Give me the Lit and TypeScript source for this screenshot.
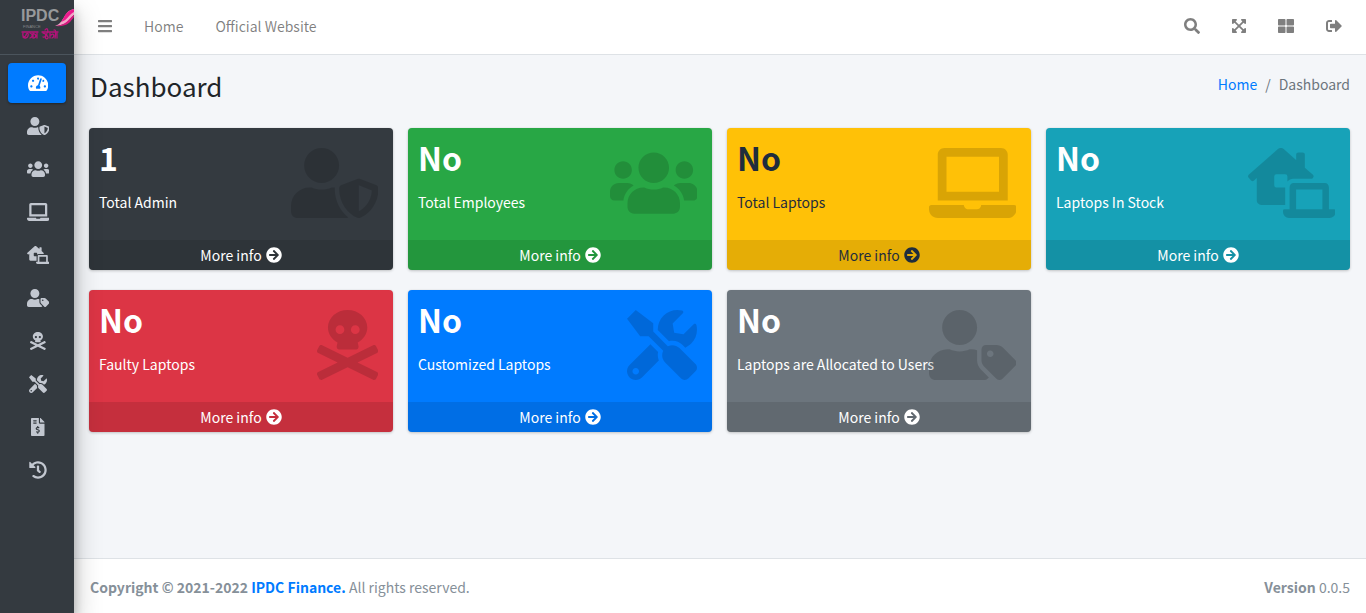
import { LitElement, html, svg, css } from "lit";
import { customElement, property } from "lit/decorators.js";
import { classMap } from "lit/directives/class-map.js";

interface Icon {
  w: number;
  d: string;
}

const icons: Record<string, Icon> = {
  gauge: { w: 576, d: "M288 32C128.94 32 0 160.94 0 320c0 52.8 14.25 102.26 39.06 144.8 5.61 9.62 16.3 15.2 27.44 15.2h443c11.14 0 21.83-5.58 27.44-15.2C561.75 422.26 576 372.8 576 320c0-159.06-128.94-288-288-288zm0 64c14.71 0 26.58 10.13 30.32 23.65-1.11 2.26-2.64 4.23-3.45 6.67l-9.22 27.67c-5.13 3.49-10.97 6.01-17.64 6.01-17.67 0-32-14.33-32-32S270.33 96 288 96zM96 384c-17.67 0-32-14.33-32-32s14.33-32 32-32 32 14.33 32 32-14.33 32-32 32zm48-160c-17.67 0-32-14.33-32-32s14.33-32 32-32 32 14.33 32 32-14.33 32-32 32zm246.77-72.41l-61.33 184C343.13 347.33 352 364.54 352 384c0 11.72-3.38 22.55-8.88 32H232.88c-5.5-9.45-8.88-20.28-8.88-32 0-33.94 26.5-61.43 59.9-63.59l61.34-184.01c4.17-12.56 17.73-19.45 30.36-15.17 12.57 4.19 19.35 17.79 15.17 30.36zm14.66 57.2l15.52-46.55c3.47-1.29 7.13-2.23 11.05-2.23 17.67 0 32 14.33 32 32s-14.33 32-32 32c-11.38-.01-20.89-6.28-26.57-15.22zM480 384c-17.67 0-32-14.33-32-32s14.33-32 32-32 32 14.33 32 32-14.33 32-32 32z" },
  userShield: { w: 640, d: "M622.3 271.1l-115.2-45c-4.1-1.6-12.6-3.7-22.2 0l-115.2 45c-10.7 4.2-17.7 14-17.7 24.9 0 111.6 68.7 188.8 132.9 213.9 9.6 3.7 18 1.6 22.2 0C558.4 489.9 640 420.5 640 296c0-10.9-7-20.7-17.7-24.9zM496 462.4V273.3l95.5 37.3c-5.6 87.1-60.9 135.4-95.5 151.8zM224 256c70.7 0 128-57.3 128-128S294.7 0 224 0 96 57.3 96 128s57.3 128 128 128zm96 40c0-2.5.8-4.8 1.1-7.2-2.5-.1-4.9-.8-7.5-.8h-16.7c-22.2 10.2-46.9 16-72.9 16s-50.6-5.8-72.9-16h-16.7C60.2 288 0 348.2 0 422.4V464c0 26.5 21.5 48 48 48h352c6.8 0 13.3-1.5 19.2-4-54-42.9-99.2-116.7-99.2-212z" },
  users: { w: 640, d: "M96 224c35.3 0 64-28.7 64-64s-28.7-64-64-64-64 28.7-64 64 28.7 64 64 64zm448 0c35.3 0 64-28.7 64-64s-28.7-64-64-64-64 28.7-64 64 28.7 64 64 64zm32 32h-64c-17.6 0-33.5 7.1-45.1 18.6 40.3 22.1 68.9 62 75.1 109.4h66c17.7 0 32-14.3 32-32v-32c0-35.3-28.7-64-64-64zm-256 0c61.9 0 112-50.1 112-112S381.9 32 320 32 208 82.1 208 144s50.1 112 112 112zm76.8 32h-8.3c-20.8 10-43.9 16-68.5 16s-47.6-6-68.5-16h-8.3C179.6 288 128 339.6 128 403.2V432c0 26.5 21.5 48 48 48h288c26.5 0 48-21.5 48-48v-28.8c0-63.6-51.6-115.2-115.2-115.2zm-223.7-13.4C161.5 263.1 145.6 256 128 256H64c-35.3 0-64 28.7-64 64v32c0 17.7 14.3 32 32 32h65.9c6.3-47.4 34.9-87.3 75.2-109.4z" },
  laptop: { w: 640, d: "M624 416H381.54c-.74 19.81-14.71 32-32.74 32H288c-18.69 0-33.02-17.47-32.77-32H16c-8.8 0-16 7.2-16 16v16c0 35.2 28.8 64 64 64h512c35.2 0 64-28.8 64-64v-16c0-8.8-7.2-16-16-16zM576 48c0-26.4-21.6-48-48-48H112C85.6 0 64 21.6 64 48v336h512V48zm-64 272H128V64h384v256z" },
  laptopHouse: { w: 640, d: "M272,288H208a16,16,0,0,1-16-16V208a16,16,0,0,1,16-16h64a16,16,0,0,1,16,16v37.12C299.11,232.24,315,224,332.8,224H469.74l6.65-7.53A16.51,16.51,0,0,0,480,207a16.31,16.31,0,0,0-4.75-10.61L416,144V48a16,16,0,0,0-16-16H368a16,16,0,0,0-16,16V87.3L263.5,8.92C258,4,247.45,0,240.05,0s-17.93,4-23.47,8.92L4.78,196.42A16.15,16.15,0,0,0,0,207a16.4,16.4,0,0,0,3.55,9.39L22.34,237.7A16.22,16.22,0,0,0,33,242.48,16.51,16.51,0,0,0,42.34,239L64,219.88V384a32,32,0,0,0,32,32H272ZM629.33,448H592V288c0-17.67-12.89-32-28.8-32H332.8c-15.91,0-28.8,14.33-28.8,32V448H266.67A10.67,10.67,0,0,0,256,458.67v10.66A42.82,42.82,0,0,0,298.6,512H597.4A42.82,42.82,0,0,0,640,469.33V458.67A10.67,10.67,0,0,0,629.33,448ZM544,448H352V304H544Z" },
  userTag: { w: 640, d: "M630.6 364.9l-90.3-90.2c-12-12-28.3-18.7-45.3-18.7h-79.3c-17.7 0-32 14.3-32 32v79.2c0 17 6.7 33.2 18.7 45.2l90.3 90.2c12.5 12.5 32.8 12.5 45.3 0l92.5-92.5c12.6-12.5 12.6-32.7.1-45.2zm-182.8-21c-13.3 0-24-10.7-24-24s10.7-24 24-24 24 10.7 24 24c0 13.2-10.7 24-24 24zm-223.8-88c70.7 0 128-57.3 128-128C352 57.3 294.7 0 224 0S96 57.3 96 128c0 70.6 57.3 127.9 128 127.9zm127.8 111.2V294c-12.2-3.6-24.9-6.2-38.2-6.2h-16.7c-22.2 10.2-46.9 16-72.9 16s-50.6-5.8-72.9-16h-16.7C60.2 287.9 0 348.1 0 422.3v41.6c0 26.5 21.5 48 48 48h352c15.5 0 29.1-7.5 37.9-18.9l-58-58c-18.1-18.1-28.1-42.2-28.1-67.9z" },
  skull: { w: 448, d: "M439.15 453.06L297.17 384l141.99-69.06c7.9-3.95 11.11-13.56 7.15-21.46L432 264.85c-3.95-7.9-13.56-11.11-21.47-7.16L224 348.41 37.47 257.69c-7.9-3.95-17.51-.75-21.47 7.16L1.69 293.48c-3.95 7.9-.75 17.51 7.15 21.46L150.83 384 8.85 453.06c-7.9 3.95-11.11 13.56-7.15 21.47l14.31 28.63c3.95 7.9 13.56 11.11 21.47 7.15L224 419.59l186.53 90.72c7.9 3.95 17.51.75 21.47-7.15l14.31-28.63c3.95-7.91.74-17.52-7.16-21.47zM150 237.28l-5.48 25.87c-2.67 12.62 5.42 24.85 16.45 24.85h126.08c11.03 0 19.12-12.23 16.45-24.85l-5.5-25.87c41.78-22.41 70-62.75 70-109.28C368 57.31 303.53 0 224 0S80 57.31 80 128c0 46.53 28.22 86.87 70 109.28zM280 112c17.65 0 32 14.35 32 32s-14.35 32-32 32-32-14.35-32-32 14.35-32 32-32zm-112 0c17.65 0 32 14.35 32 32s-14.35 32-32 32-32-14.35-32-32 14.35-32 32-32z" },
  tools: { w: 512, d: "M501.1 395.7L384 278.6c-23.1-23.1-57.6-27.6-85.4-13.9L192 158.1V96L64 0 0 64l96 128h62.1l106.6 106.6c-13.6 27.8-9.2 62.3 13.9 85.4l117.1 117.1c14.6 14.6 38.2 14.6 52.7 0l52.7-52.7c14.5-14.6 14.5-38.2 0-52.7zM331.7 225c28.3 0 54.9 11 74.9 31l19.4 19.4c15.8-6.9 30.8-16.5 43.8-29.5 37.1-37.1 49.7-89.3 37.9-136.7-2.2-9-13.5-12.1-20.1-5.5l-74.4 74.4-67.9-11.3L334 98.9l74.4-74.4c6.6-6.6 3.4-17.9-5.7-20.2-47.4-11.7-99.6.9-136.6 37.9-28.5 28.5-41.9 66.1-41.2 103.6l82.1 82.1c8.1-1.9 16.5-2.9 24.7-2.9zm-103.9 82l-56.7-56.7L18.7 402.8c-25 25-25 65.5 0 90.5s65.5 25 90.5 0l123.6-123.6c-7.6-19.9-9.9-41.6-5-62.7zM64 472c-13.2 0-24-10.8-24-24 0-13.3 10.7-24 24-24s24 10.7 24 24c0 13.2-10.7 24-24 24z" },
  invoice: { w: 384, d: "M377 105L279.1 7c-4.5-4.5-10.6-7-17-7H256v128h128v-6.1c0-6.3-2.5-12.4-7-16.9zm-153 31V0H24C10.7 0 0 10.7 0 24v464c0 13.3 10.7 24 24 24h336c13.3 0 24-10.7 24-24V160H248c-13.2 0-24-10.8-24-24zM64 72c0-4.42 3.58-8 8-8h80c4.42 0 8 3.58 8 8v16c0 4.42-3.58 8-8 8H72c-4.42 0-8-3.58-8-8V72zm0 80v-16c0-4.42 3.58-8 8-8h80c4.42 0 8 3.58 8 8v16c0 4.42-3.58 8-8 8H72c-4.42 0-8-3.58-8-8zm144 263.88V440c0 4.42-3.58 8-8 8h-16c-4.42 0-8-3.58-8-8v-24.29c-11.29-.58-22.27-4.52-31.37-11.35-3.9-2.93-4.1-8.77-.57-12.14l11.75-11.21c2.77-2.64 6.89-2.76 10.13-.73 3.87 2.42 8.26 3.72 12.82 3.72h28.11c6.5 0 11.8-5.92 11.8-13.19 0-5.95-3.61-11.19-8.77-12.73l-45-13.5c-18.59-5.58-31.58-23.42-31.58-43.39 0-24.52 19.05-44.44 42.67-45.07V232c0-4.42 3.58-8 8-8h16c4.42 0 8 3.58 8 8v24.29c11.29.58 22.27 4.51 31.37 11.35 3.9 2.93 4.1 8.77.57 12.14l-11.75 11.21c-2.77 2.64-6.89 2.76-10.13.73-3.87-2.43-8.26-3.72-12.82-3.72h-28.11c-6.5 0-11.8 5.92-11.8 13.19 0 5.95 3.61 11.19 8.77 12.73l45 13.5c18.59 5.58 31.58 23.42 31.58 43.39 0 24.53-19.05 44.44-42.67 45.07z" },
  history: { w: 512, d: "M504 255.531c.253 136.64-111.18 248.372-247.82 248.468-59.015.042-113.223-20.53-155.822-54.911-11.077-8.94-11.905-25.541-1.839-35.607l11.267-11.267c8.609-8.609 22.353-9.551 31.891-1.984C173.062 425.135 212.781 440 256 440c101.705 0 184-82.311 184-184 0-101.705-82.311-184-184-184-48.814 0-93.149 18.969-126.068 49.932l50.754 50.754c10.08 10.08 2.941 27.314-11.313 27.314H24c-8.837 0-16-7.163-16-16V38.627c0-14.254 17.234-21.393 27.314-11.314l49.372 49.372C129.209 34.136 189.552 8 256 8c136.81 0 247.747 110.78 248 247.531zm-180.912 78.784l9.823-12.63c8.138-10.463 6.253-25.542-4.21-33.679L288 256.349V152c0-13.255-10.745-24-24-24h-16c-13.255 0-24 10.745-24 24v135.651l65.409 50.874c10.463 8.137 25.541 6.253 33.679-4.21z" },
  bars: { w: 448, d: "M16 132h416c8.837 0 16-7.163 16-16V76c0-8.837-7.163-16-16-16H16C7.163 60 0 67.163 0 76v40c0 8.837 7.163 16 16 16zm0 160h416c8.837 0 16-7.163 16-16v-40c0-8.837-7.163-16-16-16H16c-8.837 0-16 7.163-16 16v40c0 8.837 7.163 16 16 16zm0 160h416c8.837 0 16-7.163 16-16v-40c0-8.837-7.163-16-16-16H16c-8.837 0-16 7.163-16 16v40c0 8.837 7.163 16 16 16z" },
  search: { w: 512, d: "M505 442.7L405.3 343c-4.5-4.5-10.6-7-17-7H372c27.6-35.3 44-79.7 44-128C416 93.1 322.9 0 208 0S0 93.1 0 208s93.1 208 208 208c48.3 0 92.7-16.4 128-44v16.3c0 6.4 2.5 12.5 7 17l99.7 99.7c9.4 9.4 24.6 9.4 33.9 0l28.3-28.3c9.4-9.4 9.4-24.6.1-34zM208 336c-70.7 0-128-57.2-128-128 0-70.7 57.2-128 128-128 70.7 0 128 57.2 128 128 0 70.7-57.2 128-128 128z" },
  expand: { w: 448, d: "M448 344v112a23.94 23.94 0 0 1-24 24H312c-21.39 0-32.09-25.9-17-41l36.2-36.2L224 295.6 116.77 402.9 153 439c15.09 15.1 4.39 41-17 41H24a23.94 23.94 0 0 1-24-24V344c0-21.4 25.89-32.1 41-17l36.19 36.2L184.46 256 77.18 148.7 41 185c-15.1 15.1-41 4.4-41-17V56a23.94 23.94 0 0 1 24-24h112c21.39 0 32.09 25.9 17 41l-36.2 36.2L224 216.4l107.23-107.3L295 73c-15.09-15.1-4.39-41 17-41h112a23.94 23.94 0 0 1 24 24v112c0 21.4-25.89 32.1-41 17l-36.19-36.2L263.54 256l107.28 107.3L407 327.1c15.1-15.2 41-4.5 41 16.9z" },
  grid: { w: 512, d: "M296 32h192c13.255 0 24 10.745 24 24v160c0 13.255-10.745 24-24 24H296c-13.255 0-24-10.745-24-24V56c0-13.255 10.745-24 24-24zm-80 0H24C10.745 32 0 42.745 0 56v160c0 13.255 10.745 24 24 24h192c13.255 0 24-10.745 24-24V56c0-13.255-10.745-24-24-24zM0 296v160c0 13.255 10.745 24 24 24h192c13.255 0 24-10.745 24-24V296c0-13.255-10.745-24-24-24H24c-13.255 0-24 10.745-24 24zm296 184h192c13.255 0 24-10.745 24-24V296c0-13.255-10.745-24-24-24H296c-13.255 0-24 10.745-24 24v160c0 13.255 10.745 24 24 24z" },
  signOut: { w: 512, d: "M497 273L329 441c-15 15-41 4.5-41-17v-96H152c-13.3 0-24-10.7-24-24v-96c0-13.3 10.7-24 24-24h136V88c0-21.4 25.9-32 41-17l168 168c9.3 9.4 9.3 24.6 0 34zM192 436v-40c0-6.6-5.4-12-12-12H96c-17.7 0-32-14.3-32-32V160c0-17.7 14.3-32 32-32h84c6.6 0 12-5.4 12-12V76c0-6.6-5.4-12-12-12H96c-53 0-96 43-96 96v192c0 53 43 96 96 96h84c6.6 0 12-5.4 12-12z" },
  arrow: { w: 512, d: "M256 8c137 0 248 111 248 248S393 504 256 504 8 393 8 256 119 8 256 8zm-28.9 143.6l75.5 72.4H120c-13.3 0-24 10.7-24 24v16c0 13.3 10.7 24 24 24h182.6l-75.5 72.4c-9.7 9.3-9.9 24.8-.4 34.3l11 10.9c9.4 9.4 24.6 9.4 33.9 0L404.3 273c9.4-9.4 9.4-24.6 0-33.9L271.6 106.3c-9.4-9.4-24.6-9.4-33.9 0l-11 10.9c-9.5 9.6-9.3 25.1.4 34.4z" },
};

const icon = (name: string) => {
  const i = icons[name];
  return html`<svg class="icon" viewBox="0 0 ${i.w} 512" aria-hidden="true">${svg`<path d=${i.d}></path>`}</svg>`;
};

const shared = css`
  *,
  *::before,
  *::after {
    box-sizing: border-box;
  }
  a {
    color: inherit;
    text-decoration: none;
  }
  .icon {
    display: block;
    height: 16px;
    width: auto;
    fill: currentColor;
  }
`;

@customElement("stat-card")
export class StatCard extends LitElement {
  @property() value = "";
  @property() label = "";
  @property() icon = "";
  @property() tone = "";

  static styles = [
    shared,
    css`
      :host {
        display: block;
      }
      .card {
        position: relative;
        display: flex;
        flex-direction: column;
        border-radius: 4px;
        color: #fff;
        box-shadow: 0 0 1px rgba(0, 0, 0, 0.13), 0 1px 3px rgba(0, 0, 0, 0.2);
      }
      .inner {
        padding: 10px 10px 26px;
      }
      .value {
        margin: 0 0 14px;
        font-size: 32px;
        line-height: 38px;
        font-weight: 700;
        white-space: nowrap;
      }
      .label {
        margin: 0;
      }
      .art {
        position: absolute;
        top: 20px;
        right: 15px;
        color: rgba(0, 0, 0, 0.15);
      }
      .art .icon {
        height: 70px;
      }
      .more {
        display: flex;
        justify-content: center;
        align-items: center;
        gap: 4px;
        padding: 3px 0;
        background: rgba(0, 0, 0, 0.1);
        border-radius: 0 0 4px 4px;
      }
      .dark { background: #343a40; }
      .green { background: #28a745; }
      .yellow { background: #ffc107; color: #1f2d3d; }
      .teal { background: #17a2b8; }
      .red { background: #dc3545; }
      .blue { background: #007bff; }
      .gray { background: #6c757d; }
    `,
  ];

  render() {
    return html`
      <article class=${classMap({ card: true, [this.tone]: true })}>
        <div class="inner">
          <h3 class="value">${this.value}</h3>
          <p class="label">${this.label}</p>
        </div>
        <div class="art">${icon(this.icon)}</div>
        <a class="more" href="#"><span>More info</span>${icon("arrow")}</a>
      </article>
    `;
  }
}

@customElement("app-root")
export class AppRoot extends LitElement {
  static styles = [
    shared,
    css`
      :host {
        display: flex;
        min-height: 100vh;
        font-family: "Source Sans Pro", "Noto Sans CJK SC", "Open Sans", sans-serif;
        font-size: 14px;
        line-height: 24px;
        color: #212529;
        background: #f4f6f9;
      }
      .sidebar {
        position: relative;
        z-index: 1;
        flex: none;
        width: 74px;
        background: #343a40;
        color: #c2c7d0;
        box-shadow: 0 14px 28px rgba(0, 0, 0, 0.25), 0 10px 10px rgba(0, 0, 0, 0.22);
      }
      .brand {
        display: flex;
        justify-content: flex-end;
        height: 55px;
        padding-top: 8px;
        border-bottom: 1px solid #4b545c;
      }
      .logo {
        display: block;
        width: 53px;
        height: 34px;
        overflow: visible;
      }
      .word {
        font: 700 16px "Liberation Sans", sans-serif;
        fill: #97999b;
      }
      .sub {
        font: 4px "Liberation Sans", sans-serif;
        fill: #85888a;
      }
      .menu {
        display: flex;
        flex-direction: column;
        gap: 3px;
        margin: 0;
        padding: 8px;
        list-style: none;
      }
      .item {
        display: flex;
        justify-content: center;
        align-items: center;
        height: 40px;
        padding-left: 2px;
        border-radius: 4px;
      }
      .item .icon {
        height: 18px;
      }
      .active {
        background: #007bff;
        color: #fff;
        box-shadow: 0 1px 3px rgba(0, 0, 0, 0.12), 0 1px 2px rgba(0, 0, 0, 0.24);
      }
      .page {
        flex: 1;
        min-width: 0;
        display: flex;
        flex-direction: column;
      }
      .topbar {
        display: flex;
        justify-content: space-between;
        align-items: center;
        height: 55px;
        padding: 0 8px 2px;
        background: #fff;
        border-bottom: 1px solid #dee2e6;
        color: rgba(0, 0, 0, 0.5);
      }
      .links {
        display: flex;
        align-items: center;
      }
      .link {
        display: block;
        padding: 8px 16px;
        border: 0;
        background: none;
        color: inherit;
        font: inherit;
      }
      .heading {
        display: flex;
        justify-content: space-between;
        align-items: flex-start;
        padding: 15px 16px 27px;
      }
      .title {
        margin: 0;
        font-size: 26px;
        line-height: 31px;
        font-weight: 400;
      }
      .crumbs {
        display: flex;
        gap: 8px;
        margin: 0;
        padding: 0;
        list-style: none;
        line-height: 28px;
        color: #6c757d;
      }
      .accent {
        color: #007bff;
      }
      .cards {
        flex: 1;
        display: grid;
        grid-template-columns: repeat(4, 1fr);
        align-content: start;
        gap: 20px 15px;
        padding: 0 16px 20px 15px;
      }
      .footer {
        display: flex;
        justify-content: space-between;
        padding: 16px 16px 14px;
        background: #fff;
        border-top: 1px solid #dee2e6;
        color: #869099;
      }
    `,
  ];

  private menu = [
    ["gauge", "Dashboard"],
    ["userShield", "Admins"],
    ["users", "Employees"],
    ["laptop", "Laptops"],
    ["laptopHouse", "Stock"],
    ["userTag", "Allocations"],
    ["skull", "Faulty"],
    ["tools", "Customized"],
    ["invoice", "Invoices"],
    ["history", "History"],
  ];

  private cards = [
    ["1", "Total Admin", "userShield", "dark"],
    ["No", "Total Employees", "users", "green"],
    ["No", "Total Laptops", "laptop", "yellow"],
    ["No", "Laptops In Stock", "laptopHouse", "teal"],
    ["No", "Faulty Laptops", "skull", "red"],
    ["No", "Customized Laptops", "tools", "blue"],
    ["No", "Laptops are Allocated to Users", "userTag", "gray"],
  ];

  private actions = [
    ["search", "Search"],
    ["expand", "Full screen"],
    ["grid", "Apps"],
    ["signOut", "Sign out"],
  ];

  render() {
    return html`
      <aside class="sidebar">
        <a class="brand" href="#" aria-label="IPDC Finance">
          <svg class="logo" viewBox="0 0 53 34">
            <text class="word" x="0" y="13">IPDC</text>
            <text class="sub" x="2" y="20">FINANCE</text>
            <path d="M34 18C44 15 42 3 53 1V7C49 10 49 17 34 18Z" fill="#f3a5c8"></path>
            <path d="M40 14C44 9 44 3 53 1V4C48 6 47 12 40 14Z" fill="#ec1a8d"></path>
            <path d="M34 18C46 17 47 11 53 7V9C49 14 47 19 34 18Z" fill="#d6187f"></path>
            <g fill="none" stroke="#b5127a" stroke-width="1.3" stroke-linecap="round">
              <path d="M1 24H17M21 24H37"></path>
              <path d="M2 25c-1 4 2 5 3 2s3-2 2 1-4 2-5 1M9 25c3 1 3 4 0 5M12 25v5M12 26c3-1 4 3 1 4M16 25v5"></path>
              <path d="M22 25c4 0 3 5 0 4M24 22c2-3 4 0 2 3s2 3 1 5-4 0-2-2M29 25v5M30 27c3-3 4 2 1 3M33 22c2-1 2 3 1 8M36 25v5"></path>
            </g>
          </svg>
        </a>
        <nav>
          <ul class="menu">
            ${this.menu.map(
              ([name, label], i) => html`<li>
                <a class=${classMap({ item: true, active: i === 0 })} href="#" aria-label=${label}>${icon(name)}</a>
              </li>`
            )}
          </ul>
        </nav>
      </aside>
      <div class="page">
        <header class="topbar">
          <nav class="links">
            <button class="link" aria-label="Toggle menu">${icon("bars")}</button>
            <a class="link" href="#">Home</a>
            <a class="link" href="#">Official Website</a>
          </nav>
          <div class="links">
            ${this.actions.map(
              ([name, label]) => html`<button class="link" aria-label=${label}>${icon(name)}</button>`
            )}
          </div>
        </header>
        <div class="heading">
          <h1 class="title">Dashboard</h1>
          <ol class="crumbs">
            <li><a class="accent" href="#">Home</a></li>
            <li>/</li>
            <li>Dashboard</li>
          </ol>
        </div>
        <main class="cards">
          ${this.cards.map(
            ([value, label, art, tone]) =>
              html`<stat-card .value=${value} .label=${label} .icon=${art} .tone=${tone}></stat-card>`
          )}
        </main>
        <footer class="footer">
          <span><strong>Copyright © 2021-2022 <a class="accent" href="#">IPDC Finance.</a></strong> All rights reserved.</span>
          <span><b>Version</b> 0.0.5</span>
        </footer>
      </div>
    `;
  }
}
